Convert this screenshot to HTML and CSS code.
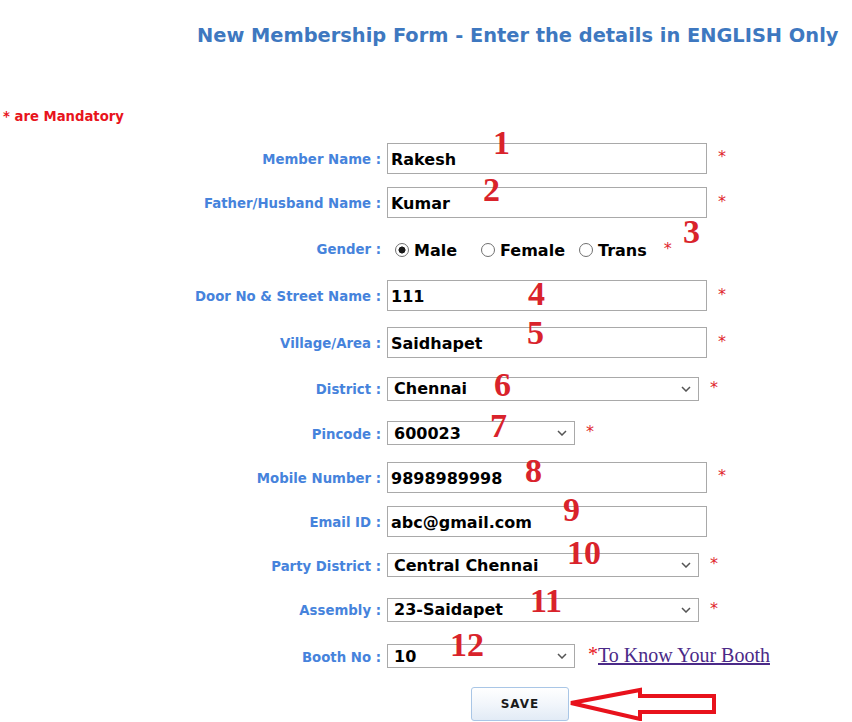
FILE: index.html
```html
<!DOCTYPE html>
<html>
<head>
<meta charset="utf-8">
<link rel="stylesheet" href="styles.css">
</head>
<body>
<div class="page">
  <h1 class="title">New Membership Form - Enter the details in ENGLISH Only</h1>
  <p class="mandatory">* are Mandatory</p>

  <form class="form">
    <div class="row h44">
      <label class="lbl">Member Name :</label>
      <div class="field"><input class="txt" type="text" value="Rakesh"><span class="req">*</span></div>
    </div>
    <div class="row h45">
      <label class="lbl">Father/Husband Name :</label>
      <div class="field"><input class="txt" type="text" value="Kumar"><span class="req">*</span></div>
    </div>
    <div class="row h47">
      <label class="lbl">Gender :</label>
      <div class="field gender">
        <label class="opt"><input class="rad" type="radio" name="g" checked>Male</label>
        <label class="opt"><input class="rad" type="radio" name="g">Female</label>
        <label class="opt"><input class="rad" type="radio" name="g">Trans</label>
        <span class="req req-g">*</span>
      </div>
    </div>
    <div class="row h47">
      <label class="lbl">Door No &amp; Street Name :</label>
      <div class="field"><input class="txt" type="text" value="111"><span class="req">*</span></div>
    </div>
    <div class="row h47">
      <label class="lbl">Village/Area :</label>
      <div class="field"><input class="txt" type="text" value="Saidhapet"><span class="req">*</span></div>
    </div>
    <div class="row h45">
      <label class="lbl">District :</label>
      <div class="field">
        <span class="selwrap wide"><select class="sel"><option>Chennai</option></select><svg class="chev" width="10" height="6" viewBox="0 0 10 6"><path d="M1 1 L5 5 L9 1" fill="none" stroke="#555" stroke-width="1.5"/></svg></span><span class="req">*</span>
      </div>
    </div>
    <div class="row h44">
      <label class="lbl">Pincode :</label>
      <div class="field">
        <span class="selwrap narrow"><select class="sel"><option>600023</option></select><svg class="chev" width="10" height="6" viewBox="0 0 10 6"><path d="M1 1 L5 5 L9 1" fill="none" stroke="#555" stroke-width="1.5"/></svg></span><span class="req">*</span>
      </div>
    </div>
    <div class="row h44">
      <label class="lbl">Mobile Number :</label>
      <div class="field"><input class="txt" type="text" value="9898989998"><span class="req">*</span></div>
    </div>
    <div class="row h44">
      <label class="lbl">Email ID :</label>
      <div class="field"><input class="txt" type="text" value="abc@gmail.com"></div>
    </div>
    <div class="row h44">
      <label class="lbl">Party District :</label>
      <div class="field">
        <span class="selwrap wide"><select class="sel"><option>Central Chennai</option></select><svg class="chev" width="10" height="6" viewBox="0 0 10 6"><path d="M1 1 L5 5 L9 1" fill="none" stroke="#555" stroke-width="1.5"/></svg></span><span class="req">*</span>
      </div>
    </div>
    <div class="row h45">
      <label class="lbl">Assembly :</label>
      <div class="field">
        <span class="selwrap wide"><select class="sel"><option>23-Saidapet</option></select><svg class="chev" width="10" height="6" viewBox="0 0 10 6"><path d="M1 1 L5 5 L9 1" fill="none" stroke="#555" stroke-width="1.5"/></svg></span><span class="req">*</span>
      </div>
    </div>
    <div class="row h48">
      <label class="lbl">Booth No :</label>
      <div class="field">
        <span class="selwrap narrow"><select class="sel"><option>10</option></select><svg class="chev" width="10" height="6" viewBox="0 0 10 6"><path d="M1 1 L5 5 L9 1" fill="none" stroke="#555" stroke-width="1.5"/></svg></span><span class="req-b">*</span><a class="booth" href="#">To Know Your Booth</a>
      </div>
    </div>

    <div class="actions">
      <button class="save" type="button">SAVE</button>
      <svg class="arrow" width="152" height="34" viewBox="0 0 152 34">
        <polygon points="3,16 72,3 72,9 146,9 146,25 72,25 72,32" fill="none" stroke="#e8121c" stroke-width="4" stroke-linejoin="miter"/>
      </svg>
    </div>
  </form>

  <span class="num n1">1</span>
  <span class="num n2">2</span>
  <span class="num n3">3</span>
  <span class="num n4">4</span>
  <span class="num n5">5</span>
  <span class="num n6">6</span>
  <span class="num n7">7</span>
  <span class="num n8">8</span>
  <span class="num n9">9</span>
  <span class="num n10">10</span>
  <span class="num n11">11</span>
  <span class="num n12">12</span>
</div>
</body>
</html>
```
FILE: styles.css
```css
html, body {
  margin: 0;
  padding: 0;
  background: #ffffff;
}
.page {
  position: relative;
  width: 852px;
  height: 722px;
  overflow: hidden;
  font-family: "DejaVu Sans", Verdana, sans-serif;
}
.title {
  margin: 0;
  padding: 23px 0 0 197px;
  font-family: "DejaVu Sans", Verdana, sans-serif;
  font-weight: bold;
  font-size: 19.4px;
  line-height: 26px;
  color: #3e78c0;
  white-space: nowrap;
}
.mandatory {
  margin: 58px 0 0 3px;
  font-family: "DejaVu Sans Condensed", "DejaVu Sans", sans-serif;
  font-weight: bold;
  font-size: 14.7px;
  line-height: 18px;
  color: #e8141c;
}
.form {
  margin-top: 11px;
}
.row {
  display: grid;
  grid-template-columns: 381px 1fr;
  column-gap: 6px;
  align-items: center;
}
.h44 { height: 44px; }
.h45 { height: 45px; }
.h47 { height: 47px; }
.h48 { height: 48px; }
.lbl {
  text-align: right;
  font-weight: bold;
  font-size: 13.3px;
  color: #4683dc;
  white-space: nowrap;
  padding-top: 2px;
}
.field {
  display: flex;
  align-items: center;
}
.txt {
  box-sizing: border-box;
  width: 320px;
  height: 31px;
  margin: 0;
  padding: 2px 0 0 3px;
  border: 1px solid #a9a9a9;
  border-radius: 0;
  font-family: "DejaVu Sans", Verdana, sans-serif;
  font-weight: bold;
  font-size: 16px;
  color: #000;
  outline: none;
}
.req {
  margin-left: 11px;
  margin-top: -3px;
  font-size: 16px;
  color: #e0262e;
}
.gender {
  padding-left: 8px;
  margin-top: 3px;
}
.opt {
  display: flex;
  align-items: center;
  font-weight: bold;
  font-size: 16px;
  color: #000;
  margin-right: 14px;
}
.opt:first-child { margin-right: 24px; }
.rad {
  appearance: none;
  -webkit-appearance: none;
  box-sizing: border-box;
  width: 14px;
  height: 14px;
  margin: 0 5px 0 0;
  border: 1px solid #707070;
  border-radius: 50%;
  background: #fff;
}
.rad:checked {
  background: radial-gradient(circle, #1a1a1a 0 3.2px, #fff 3.8px);
}
.req-g {
  margin-left: 3px;
}
.selwrap {
  position: relative;
  display: inline-block;
  height: 24px;
}
.selwrap.wide { width: 312px; }
.selwrap.narrow { width: 188px; }
.sel {
  appearance: none;
  -webkit-appearance: none;
  box-sizing: border-box;
  width: 100%;
  height: 24px;
  margin: 0;
  padding: 0 0 0 6px;
  border: 1px solid #a9a9a9;
  border-radius: 0;
  background: #fff;
  font-family: "DejaVu Sans", Verdana, sans-serif;
  font-weight: bold;
  font-size: 16px;
  color: #000;
}
.chev {
  position: absolute;
  right: 8px;
  top: 9px;
  pointer-events: none;
}
.req-b {
  margin-left: 13px;
  margin-top: -4px;
  font-family: "Liberation Serif", serif;
  font-size: 20px;
  color: #e8141c;
}
.booth {
  font-family: "Liberation Serif", "Times New Roman", serif;
  font-size: 20px;
  color: #4b2a88;
  text-decoration: underline;
  margin-top: -2px;
}
.actions {
  display: flex;
  align-items: center;
  padding-left: 471px;
  margin-top: 7px;
}
.save {
  box-sizing: border-box;
  width: 98px;
  height: 34px;
  margin: 0;
  padding: 0;
  border: 1px solid #a9c6e6;
  border-radius: 3px;
  background: linear-gradient(#ffffff, #f2f6fb 50%, #e2ebf6);
  font-family: "DejaVu Sans", Verdana, sans-serif;
  font-weight: bold;
  font-size: 12px;
  letter-spacing: 1px;
  color: #1a1a1a;
}
.arrow {
  display: block;
  margin-left: -1px;
}
.num {
  position: absolute;
  font-family: "Liberation Serif", "Times New Roman", serif;
  font-weight: bold;
  font-size: 34px;
  line-height: 34px;
  color: #d9232b;
}
.n1 { left: 493px; top: 126px; }
.n2 { left: 483px; top: 173px; }
.n3 { left: 683px; top: 215px; }
.n4 { left: 528px; top: 277px; }
.n5 { left: 527px; top: 316px; }
.n6 { left: 494px; top: 368px; }
.n7 { left: 490px; top: 409px; }
.n8 { left: 525px; top: 454px; }
.n9 { left: 563px; top: 493px; }
.n10 { left: 567px; top: 536px; }
.n11 { left: 530px; top: 584px; }
.n12 { left: 450px; top: 628px; }
```
